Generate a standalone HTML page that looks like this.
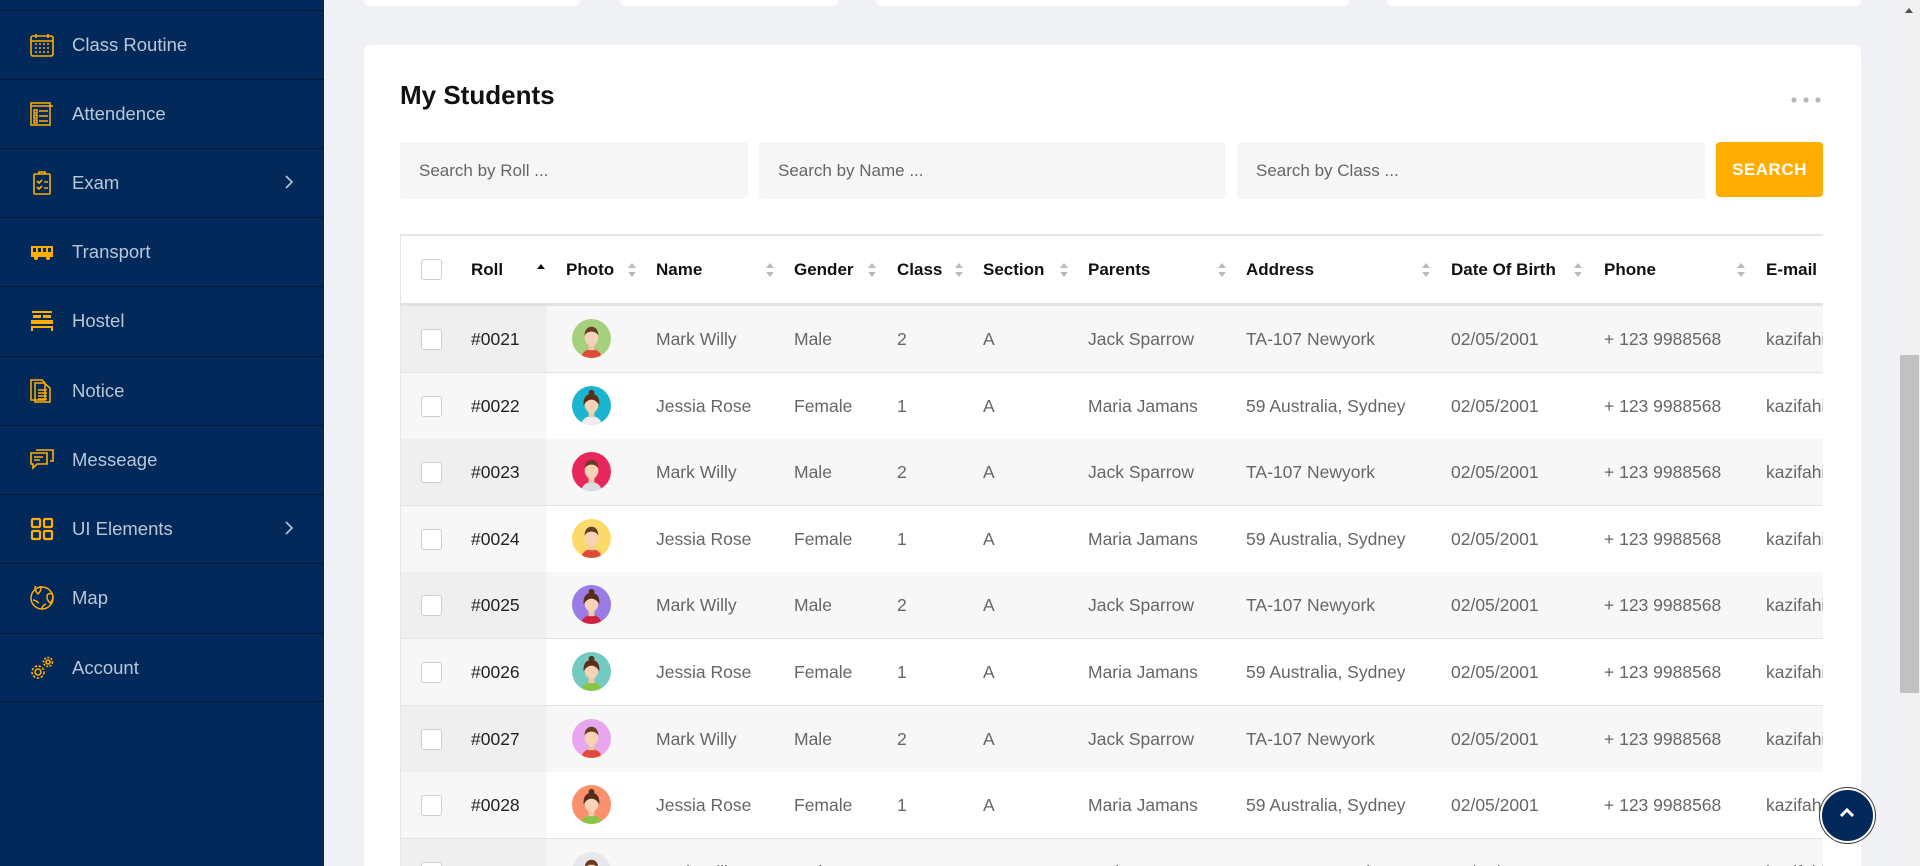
<!DOCTYPE html>
<html style="overflow:hidden;width:1920px;height:866px"><head><meta charset="utf-8"><style>
*{margin:0;padding:0;box-sizing:border-box}
body{width:1920px;height:866px;overflow:hidden;background:#f0f1f5;font-family:"Liberation Sans",Arial,sans-serif;position:relative}
.sb{position:absolute;left:0;top:0;width:324px;height:866px;background:#03295a}
.it{position:absolute;left:0;width:324px;border-top:1px solid #021a3a;height:69px}
.it span{position:absolute;left:72px;top:23px;font-size:18.5px;color:#b9c6d6}
.it svg.ic{position:absolute;left:30px;top:22px}
.it .chev{position:absolute;left:284px;top:25px}
.tc{position:absolute;top:0;height:6px;background:#fff;border-radius:0 0 5px 5px}
.card{position:absolute;left:364px;top:45px;width:1497px;height:821px;background:#fff;border-radius:6px 6px 0 0}
h1{position:absolute;left:400px;top:80px;font-size:26px;font-weight:bold;color:#111}
.inp{position:absolute;top:142px;height:57px;background:#f6f6f6;border-radius:4px;font-size:17px;color:#666;padding:19px 0 0 19px}
.btn{position:absolute;left:1716px;top:142px;width:107px;height:55px;background:#ffae01;border-radius:4px;color:#fff;font-weight:bold;font-size:17px;text-align:center;line-height:55px;letter-spacing:.5px}
.tbl{position:absolute;left:400px;top:234px;width:1423px;height:632px;overflow:hidden;border-top:2px solid #e6e6e6;border-left:1px solid #e6e6e6}
.row{position:absolute;left:0;width:1423px;height:67px;border-bottom:1px solid #e2e2e2}
.row span{position:absolute;top:23px;font-size:17.5px;color:#666;white-space:nowrap}
.hd{height:70px;top:0;border-bottom:3px solid #e2e2e2;background:#fff}
.hd span{color:#111;font-weight:bold;top:24px;font-size:17px}
.cb{position:absolute;left:20px;top:23px;width:21px;height:21px;border:1px solid #cfcfcf;border-radius:3px;background:#fff}
.sc{position:absolute;left:0;top:0;width:146px;height:100%}
.ar{position:absolute;top:25px;width:10px;height:18px}
.av{position:absolute;left:171px;top:13px;width:39px;height:39px;border-radius:50%;overflow:hidden}
</style></head><body>
<div class="sb">
<div class="it" style="top:10px"><svg class="ic" width="24" height="24" viewBox="0 0 24 24" fill="none" stroke="#ffae01" stroke-width="1.6"><rect x="1" y="3" width="22" height="20" rx="2"/><path d="M1 8h22M6 1v4M18 1v4M5 11h2M9 11h2M13 11h2M17 11h2M5 15h2M9 15h2M13 15h2M17 15h2M5 19h2M9 19h2M13 19h2M17 19h2"/></svg><span>Class Routine</span></div>
<div class="it" style="top:79px"><svg class="ic" width="24" height="24" viewBox="0 0 24 24" fill="none" stroke="#ffae01" stroke-width="1.5"><rect x="1" y="1" width="19" height="22"/><path d="M1 4h22M4 8h3v3H4zM4 13h3v3H4zM4 18h3v3H4zM9 9h9M9 14h9M9 19h9"/></svg><span>Attendence</span></div>
<div class="it" style="top:148px"><svg class="ic" width="24" height="24" viewBox="0 0 24 24" fill="none" stroke="#ffae01" stroke-width="1.6"><rect x="4" y="3" width="16" height="20" rx="1"/><path d="M9 3V1h6v2M7 10l2 2 3-3M7 16l2 2 3-3M14 11h4M14 17h4"/></svg><span>Exam</span><svg class="chev" width="10" height="16" viewBox="0 0 10 16"><path d="M2 2l6 6-6 6" fill="none" stroke="#b9c6d6" stroke-width="1.6"/></svg></div>
<div class="it" style="top:217px"><svg class="ic" width="24" height="24" viewBox="0 0 24 24" fill="#ffae01"><path d="M1 6h22v11H1z"/><rect x="3" y="8" width="3" height="4" fill="#03295a"/><rect x="8" y="8" width="3" height="4" fill="#03295a"/><rect x="13" y="8" width="3" height="4" fill="#03295a"/><rect x="18" y="8" width="3" height="4" fill="#03295a"/><circle cx="6" cy="18" r="2"/><circle cx="18" cy="18" r="2"/></svg><span>Transport</span></div>
<div class="it" style="top:286px"><svg class="ic" width="24" height="24" viewBox="0 0 24 24" fill="#ffae01"><rect x="2" y="2" width="20" height="2"/><rect x="3" y="6" width="8" height="3"/><rect x="13" y="6" width="8" height="3"/><rect x="1" y="11" width="22" height="4"/><rect x="1" y="17" width="22" height="2"/><rect x="1" y="19" width="2" height="3"/><rect x="21" y="19" width="2" height="3"/></svg><span>Hostel</span></div>
<div class="it" style="top:356px"><svg class="ic" width="24" height="24" viewBox="0 0 24 24" fill="none" stroke="#ffae01" stroke-width="1.5"><path d="M1 1h11l3 3v17H1z"/><path d="M5 4h9l6 5v14H5z"/><path d="M8 11h9M8 14h9M8 17h9M8 20h9"/></svg><span>Notice</span></div>
<div class="it" style="top:425px"><svg class="ic" width="24" height="24" viewBox="0 0 24 24" fill="none" stroke="#ffae01" stroke-width="1.6"><path d="M1 5h16v11H7l-4 4v-4H1z"/><path d="M6 2h17v11h-3"/><path d="M4 9h9M4 12h6"/></svg><span>Messeage</span></div>
<div class="it" style="top:494px"><svg class="ic" width="24" height="24" viewBox="0 0 24 24" fill="none" stroke="#ffae01" stroke-width="2.2"><rect x="2" y="2" width="8" height="8" rx="1"/><rect x="14" y="2" width="8" height="8" rx="1"/><rect x="2" y="14" width="8" height="8" rx="1"/><rect x="14" y="14" width="8" height="8" rx="1"/></svg><span>UI Elements</span><svg class="chev" width="10" height="16" viewBox="0 0 10 16"><path d="M2 2l6 6-6 6" fill="none" stroke="#b9c6d6" stroke-width="1.6"/></svg></div>
<div class="it" style="top:563px"><svg class="ic" width="24" height="24" viewBox="0 0 24 24" fill="none" stroke="#ffae01" stroke-width="1.5"><circle cx="12" cy="12" r="11"/><path d="M5 2a3 3 0 016 0c0 3-3 6-3 6s-3-3-3-6zM17 10a3 3 0 016 1c0 3-3 6-3 6s-3-3-3-6zM3 14c3 0 4 2 6 3M12 23c0-3 2-4 4-5"/></svg><span>Map</span></div>
<div class="it" style="top:633px;border-bottom:1px solid #021a3a"><svg class="ic" width="24" height="24" viewBox="0 0 24 24" fill="none" stroke="#ffae01" stroke-width="1.6"><circle cx="8" cy="16" r="3"/><circle cx="8" cy="16" r="6" stroke-dasharray="2.5 1.6"/><circle cx="18" cy="6" r="2"/><circle cx="18" cy="6" r="4.5" stroke-dasharray="2 1.4"/></svg><span>Account</span></div>
</div>

<div class="tc" style="left:364px;width:216px"></div>
<div class="tc" style="left:620px;width:218px"></div>
<div class="tc" style="left:876px;width:473px"></div>
<div class="tc" style="left:1387px;width:474px"></div>

<div class="card"></div>
<h1>My Students</h1>
<svg style="position:absolute;left:1790px;top:96px" width="34" height="8"><circle cx="4" cy="4" r="2.6" fill="#b8b8b8"/><circle cx="16" cy="4" r="2.6" fill="#b8b8b8"/><circle cx="28" cy="4" r="2.6" fill="#b8b8b8"/></svg>
<div class="inp" style="left:400px;width:348px">Search by Roll ...</div>
<div class="inp" style="left:759px;width:467px">Search by Name ...</div>
<div class="inp" style="left:1237px;width:468px">Search by Class ...</div>
<div class="btn">SEARCH</div>

<div class="tbl">
<div class="row hd"><div class="cb"></div>
<span style="left:70px">Roll</span><svg class="ar" style="left:135px" viewBox="0 0 10 18"><path d="M1 8l4-5 4 5z" fill="#111"/></svg>
<span style="left:165px">Photo</span><svg class="ar" style="left:226px" viewBox="0 0 10 18"><path d="M1 7l4-5 4 5zM1 11l4 5 4-5z" fill="#bbb"/></svg>
<span style="left:255px">Name</span><svg class="ar" style="left:364px" viewBox="0 0 10 18"><path d="M1 7l4-5 4 5zM1 11l4 5 4-5z" fill="#bbb"/></svg>
<span style="left:393px">Gender</span><svg class="ar" style="left:466px" viewBox="0 0 10 18"><path d="M1 7l4-5 4 5zM1 11l4 5 4-5z" fill="#bbb"/></svg>
<span style="left:496px">Class</span><svg class="ar" style="left:553px" viewBox="0 0 10 18"><path d="M1 7l4-5 4 5zM1 11l4 5 4-5z" fill="#bbb"/></svg>
<span style="left:582px">Section</span><svg class="ar" style="left:658px" viewBox="0 0 10 18"><path d="M1 7l4-5 4 5zM1 11l4 5 4-5z" fill="#bbb"/></svg>
<span style="left:687px">Parents</span><svg class="ar" style="left:816px" viewBox="0 0 10 18"><path d="M1 7l4-5 4 5zM1 11l4 5 4-5z" fill="#bbb"/></svg>
<span style="left:845px">Address</span><svg class="ar" style="left:1020px" viewBox="0 0 10 18"><path d="M1 7l4-5 4 5zM1 11l4 5 4-5z" fill="#bbb"/></svg>
<span style="left:1050px">Date Of Birth</span><svg class="ar" style="left:1172px" viewBox="0 0 10 18"><path d="M1 7l4-5 4 5zM1 11l4 5 4-5z" fill="#bbb"/></svg>
<span style="left:1203px">Phone</span><svg class="ar" style="left:1335px" viewBox="0 0 10 18"><path d="M1 7l4-5 4 5zM1 11l4 5 4-5z" fill="#bbb"/></svg>
<span style="left:1365px">E-mail</span>
</div>
</div>

<script>
(function(){
var bgs=['#a5d17f','#1cb5d0','#e8265b','#fbd96b','#9b7be6','#74c9c0','#e8a6ee','#fb906c','#e6e8ec'];
var girl=[0,1,0,0,1,1,0,1,0];
var shirt=['#e04a3a','#eeeeee','#dddddd','#e04a3a','#d0203a','#8bc34a','#e04a3a','#8bc34a','#ccc'];
var h='';
for(var i=0;i<9;i++){
var odd=i%2==0,m=odd;
var ty=Math.round(70+i*66.6);
var av='<svg class="av" viewBox="0 0 40 40"><rect width="40" height="40" fill="'+bgs[i]+'"/><path d="M9 40c2-7 6-9 11-9s9 2 11 9z" fill="'+shirt[i]+'"/><rect x="17" y="25" width="6" height="7" fill="#f2c9a8"/><ellipse cx="20" cy="19" rx="7" ry="8.5" fill="#f6d3b6"/>'+(girl[i]?'<path d="M12 20c-1-9 4-12 8-12s9 3 8 12c-2-4-5-6-8-6s-6 2-8 6z" fill="#5a2c1c"/><circle cx="20" cy="7" r="3" fill="#5a2c1c"/>':'<path d="M13 17c0-7 4-9 7-9s7 2 7 9c-2-3-4-4-7-4s-5 1-7 4z" fill="#6b3a22"/>')+'</svg>';
h+='<div class="row" style="top:'+ty+'px;background:'+(odd?'#f7f7f7':'#fff')+'"><div class="sc" style="background:'+(odd?'#efefef':'#f7f7f7')+'"></div><div class="cb"></div>'+
'<span style="left:70px;color:#222">#00'+(21+i)+'</span>'+av+
'<span style="left:255px">'+(m?'Mark Willy':'Jessia Rose')+'</span>'+
'<span style="left:393px">'+(m?'Male':'Female')+'</span>'+
'<span style="left:496px">'+(m?'2':'1')+'</span>'+
'<span style="left:582px">A</span>'+
'<span style="left:687px">'+(m?'Jack Sparrow':'Maria Jamans')+'</span>'+
'<span style="left:845px">'+(m?'TA-107 Newyork':'59 Australia, Sydney')+'</span>'+
'<span style="left:1050px">02/05/2001</span>'+
'<span style="left:1203px">+ 123 9988568</span>'+
'<span style="left:1365px">kazifahim93@gmail.com</span></div>';
}
document.querySelector('.tbl').insertAdjacentHTML('beforeend',h);
})();
</script>

<div style="position:absolute;left:1899px;top:0;width:21px;height:866px;background:#f1f1f1"></div>
<svg style="position:absolute;left:1904px;top:6px" width="10" height="8"><path d="M1 7l4-5 4 5z" fill="#505050"/></svg>
<div style="position:absolute;left:1900px;top:355px;width:19px;height:338px;background:#c1c1c1"></div>
<div style="position:absolute;left:1820px;top:788px;width:55px;height:55px;border-radius:50%;background:#03295a;border:2px solid #fff;box-shadow:0 0 0 1px #333"></div>
<svg style="position:absolute;left:1839px;top:806px" width="16" height="14"><path d="M2 10l6-6 6 6" fill="none" stroke="#fff" stroke-width="3"/></svg>
</body></html>
